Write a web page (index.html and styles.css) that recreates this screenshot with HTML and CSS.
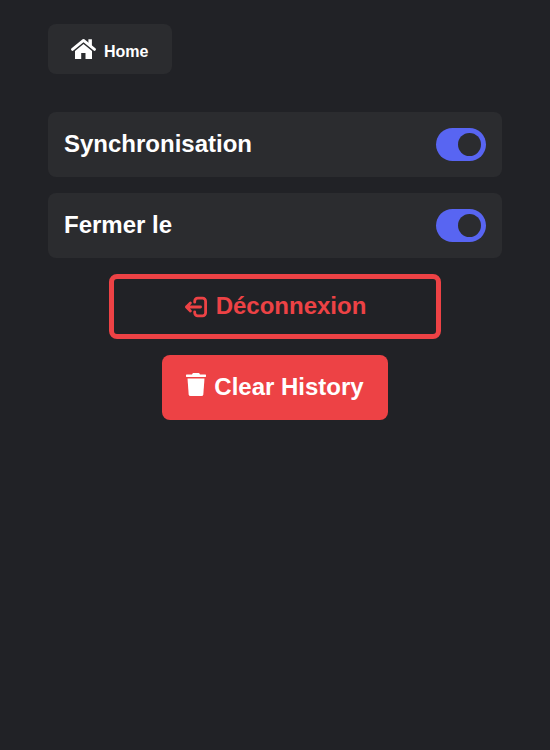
FILE: index.html
```html
<!DOCTYPE html>
<html lang="fr">
<head>
<meta charset="utf-8">
<title>Options</title>
<link rel="stylesheet" href="styles.css">
</head>
<body>
<main class="page">
  <button class="home">
    <svg class="home-icon" viewBox="0 0 26 22" aria-hidden="true">
      <path d="M2.5 11.4 13.5 2.4 24.5 11.4" fill="none" stroke="currentColor" stroke-width="2.8" stroke-linecap="round" stroke-linejoin="round"/>
      <path d="M18.4 1.2h3.5v8l-3.5-2.9z" fill="currentColor"/>
      <path d="M13.5 6 22 13V20.9H15.5V15H11.2V20.9H5V13z" fill="currentColor"/>
    </svg>
    <span>Home</span>
  </button>
  <section class="settings">
    <label class="row"><span class="text">Synchronisation</span><span class="toggle"><span class="knob"></span></span></label>
    <label class="row"><span class="text">Fermer le</span><span class="toggle"><span class="knob"></span></span></label>
    <button class="action logout">
      <svg class="logout-icon" viewBox="0 0 24 24" fill="none" stroke="currentColor" stroke-width="2.8" stroke-linecap="round" stroke-linejoin="round" aria-hidden="true">
        <path d="M10.7 7.2V6.2a3 3 0 0 1 3-3h4.9a3 3 0 0 1 3 3v11.6a3 3 0 0 1-3 3h-4.9a3 3 0 0 1-3-3v-1"/>
        <path d="M16.6 12H2.4M6.4 7.9l-4 4.1 4 4.1"/>
      </svg>
      <span class="text">Déconnexion</span>
    </button>
    <button class="action clear">
      <svg class="trash-icon" viewBox="0 0 20 24" fill="currentColor" aria-hidden="true">
        <path d="M0 1.9Q0 1.5.5 1.5H6L6.7.3Q6.9 0 7.3 0H12.7Q13.1 0 13.3.3L14 1.5H19.5Q20 1.5 20 1.9V3.6Q20 4 19.5 4H.5Q0 4 0 3.6z"/>
        <path d="M1.5 5.4H18.5L17.3 21.4Q17.1 23 15.5 23H4.5Q2.9 23 2.7 21.4z"/>
      </svg>
      <span class="text">Clear History</span>
    </button>
  </section>
</main>
</body>
</html>
```
FILE: styles.css
```css
* { box-sizing: border-box; }

body {
  margin: 0;
  min-height: 100vh;
  background: #212226;
  color: #fff;
  font-family: "Liberation Sans", Arial, sans-serif;
  font-weight: 700;
}

.page {
  display: flex;
  flex-direction: column;
  align-items: flex-start;
  gap: 38px;
  padding: 24px 48px;
}

button {
  font: inherit;
  border: 0;
  border-radius: 8px;
}

svg { display: block; flex: none; }

.home {
  display: flex;
  align-items: center;
  width: 124px;
  height: 50px;
  padding: 0 22px;
  background: #2b2c2f;
  color: #fff;
  font-size: 16px;
  line-height: 18px;
}

.home span { padding-top: 6px; }

.home-icon {
  width: 26px;
  height: 22px;
  margin-right: 8px;
}

.settings {
  display: flex;
  flex-direction: column;
  align-items: center;
  gap: 16px;
  width: 100%;
  font-size: 24px;
  line-height: 28px;
}

.text { padding-bottom: 2px; }

.row {
  display: flex;
  justify-content: space-between;
  align-items: center;
  width: 100%;
  height: 65px;
  padding: 0 16px;
  border-radius: 8px;
  background: #2b2c2f;
}

.toggle {
  display: flex;
  justify-content: flex-end;
  align-items: center;
  width: 50.4px;
  height: 33.6px;
  padding-right: 5.4px;
  border-radius: 17px;
  background: #5865f2;
}

.knob {
  width: 22.8px;
  height: 22.8px;
  border-radius: 50%;
  background: #2b2c2f;
}

.action {
  display: flex;
  justify-content: center;
  align-items: center;
  gap: 8px;
  height: 65px;
}

.logout {
  width: 332px;
  border: 5px solid #ed4245;
  background: transparent;
  color: #ed4245;
}

.logout-icon { width: 24px; height: 24px; }

.clear {
  width: 226px;
  background: #ed4245;
  color: #fff;
}

.trash-icon {
  width: 20px;
  height: 24px;
  margin-bottom: 5px;
}
```
